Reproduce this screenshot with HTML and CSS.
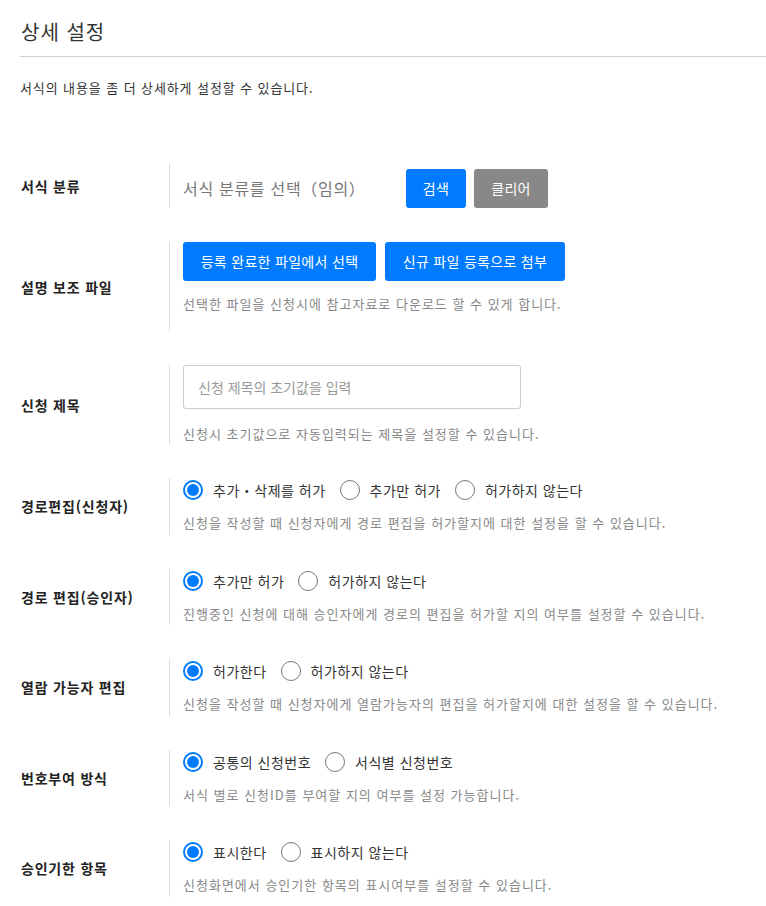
FILE: index.html
```html
<!DOCTYPE html>
<html lang="ko">
<head>
<meta charset="utf-8">
<title>상세 설정</title>
<link rel="stylesheet" href="styles.css">
</head>
<body>
<div class="page">
  <h1 class="title">상세 설정</h1>
  <p class="intro">서식의 내용을 좀 더 상세하게 설정할 수 있습니다.</p>

  <div class="rows">
    <div class="row row-category">
      <div class="label">서식 분류</div>
      <div class="content">
        <div class="inline">
          <span class="category-text">서식 분류를 선택（임의）</span>
          <button class="btn btn-blue btn-search">검색</button>
          <button class="btn btn-gray btn-clear">클리어</button>
        </div>
      </div>
    </div>

    <div class="row row-file">
      <div class="label">설명 보조 파일</div>
      <div class="content">
        <div class="inline btns">
          <button class="btn btn-blue btn-select">등록 완료한 파일에서 선택</button>
          <button class="btn btn-blue btn-attach">신규 파일 등록으로 첨부</button>
        </div>
        <div class="help help-file">선택한 파일을 신청시에 참고자료로 다운로드 할 수 있게 합니다.</div>
      </div>
    </div>

    <div class="row row-title">
      <div class="label">신청 제목</div>
      <div class="content">
        <input class="text-input" type="text" placeholder="신청 제목의 초기값을 입력">
        <div class="help help-title">신청시 초기값으로 자동입력되는 제목을 설정할 수 있습니다.</div>
      </div>
    </div>

    <div class="row row-radio">
      <div class="label">경로편집(신청자)</div>
      <div class="content">
        <div class="radios">
          <label class="radio"><input type="radio" name="r1" checked><span>추가・삭제를 허가</span></label>
          <label class="radio"><input type="radio" name="r1"><span>추가만 허가</span></label>
          <label class="radio"><input type="radio" name="r1"><span>허가하지 않는다</span></label>
        </div>
        <div class="help help-radio">신청을 작성할 때 신청자에게 경로 편집을 허가할지에 대한 설정을 할 수 있습니다.</div>
      </div>
    </div>

    <div class="row row-radio">
      <div class="label">경로 편집(승인자)</div>
      <div class="content">
        <div class="radios">
          <label class="radio"><input type="radio" name="r2" checked><span>추가만 허가</span></label>
          <label class="radio"><input type="radio" name="r2"><span>허가하지 않는다</span></label>
        </div>
        <div class="help help-radio">진행중인 신청에 대해 승인자에게 경로의 편집을 허가할 지의 여부를 설정할 수 있습니다.</div>
      </div>
    </div>

    <div class="row row-radio">
      <div class="label">열람 가능자 편집</div>
      <div class="content">
        <div class="radios">
          <label class="radio"><input type="radio" name="r3" checked><span>허가한다</span></label>
          <label class="radio"><input type="radio" name="r3"><span>허가하지 않는다</span></label>
        </div>
        <div class="help help-radio">신청을 작성할 때 신청자에게 열람가능자의 편집을 허가할지에 대한 설정을 할 수 있습니다.</div>
      </div>
    </div>

    <div class="row row-radio">
      <div class="label">번호부여 방식</div>
      <div class="content">
        <div class="radios">
          <label class="radio"><input type="radio" name="r4" checked><span>공통의 신청번호</span></label>
          <label class="radio"><input type="radio" name="r4"><span>서식별 신청번호</span></label>
        </div>
        <div class="help help-radio">서식 별로 신청ID를 부여할 지의 여부를 설정 가능합니다.</div>
      </div>
    </div>

    <div class="row row-radio">
      <div class="label">승인기한 항목</div>
      <div class="content">
        <div class="radios">
          <label class="radio"><input type="radio" name="r5" checked><span>표시한다</span></label>
          <label class="radio"><input type="radio" name="r5"><span>표시하지 않는다</span></label>
        </div>
        <div class="help help-radio">신청화면에서 승인기한 항목의 표시여부를 설정할 수 있습니다.</div>
      </div>
    </div>
  </div>
</div>
</body>
</html>
```

FILE: styles.css
```css
* { box-sizing: border-box; }

html, body {
  margin: 0;
  padding: 0;
  background: #fff;
}

body {
  font-family: "Noto Sans CJK KR", "Noto Sans", sans-serif;
  color: #333;
}

.page {
  padding-left: 20px;
}

.title {
  margin: 0;
  padding: 18px 0 10px 1px;
  font-size: 20px;
  line-height: 28px;
  font-weight: 400;
  letter-spacing: 1px;
  color: #333;
  border-bottom: 1px solid #cfcfcf;
}

.intro {
  margin: 21px 0 0 0;
  font-size: 13px;
  line-height: 20px;
  letter-spacing: 0.9px;
  color: #333;
}

.rows {
  margin-top: 66px;
  display: flex;
  flex-direction: column;
  gap: 34px;
}

.row {
  display: flex;
  align-items: center;
}

.label {
  width: 149px;
  flex: none;
  padding-left: 1px;
  font-size: 14px;
  font-weight: 700;
  color: #222;
  line-height: 20px;
  letter-spacing: 0.8px;
}

.content {
  border-left: 1px solid #dcdcdc;
  padding-left: 13px;
}

.inline {
  display: flex;
  align-items: center;
}

.row-category .content {
  padding-top: 5px;
  height: 44px;
}

.category-text {
  width: 223px;
  font-size: 16px;
  color: #777;
  line-height: 39px;
  letter-spacing: 0.7px;
}

.btn {
  height: 39px;
  border: none;
  border-radius: 3px;
  color: #fff;
  font-family: inherit;
  font-size: 14px;
  line-height: 39px;
  padding: 0;
  text-align: center;
  letter-spacing: 0.3px;
}

.btn-blue { background: #007bff; }
.btn-gray { background: #888; }

.btn-search { width: 60px; }
.btn-clear { width: 74px; margin-left: 8px; }
.btn-select { width: 193px; }
.btn-attach { width: 180px; }

.btns { gap: 9px; }

.help {
  font-size: 13px;
  line-height: 18px;
  letter-spacing: 1px;
  color: #888;
}

.row-file .content {
  height: 89px;
}
.help-file { margin-top: 14px; }

.row-title .content {
  height: 79px;
}
.text-input {
  display: block;
  width: 338px;
  height: 44px;
  border: 1px solid #ccc;
  border-radius: 3px;
  padding: 0 14px;
  font-family: inherit;
  font-size: 14px;
  color: #333;
  outline: none;
}
.text-input::placeholder { color: #999; }
.help-title { margin-top: 16px; }

.row-radio .content {
  height: 56.5px;
  padding-top: 2px;
}

.radios {
  display: flex;
  align-items: center;
  gap: 14px;
  height: 20px;
}

.radio {
  display: flex;
  align-items: center;
  gap: 10px;
  font-size: 14px;
  line-height: 20px;
  letter-spacing: 0.5px;
  color: #333;
}

.radio input {
  -webkit-appearance: none;
  appearance: none;
  margin: 0;
  width: 20px;
  height: 20px;
  border-radius: 50%;
  border: 1px solid #777;
  background: #fff;
  flex: none;
  position: relative;
}

.radio input:checked {
  border: 2px solid #007bff;
}

.radio input:checked::after {
  content: "";
  position: absolute;
  left: 2px;
  top: 2px;
  width: 12px;
  height: 12px;
  border-radius: 50%;
  background: #007bff;
}

.help-radio { margin-top: 14px; }
```
